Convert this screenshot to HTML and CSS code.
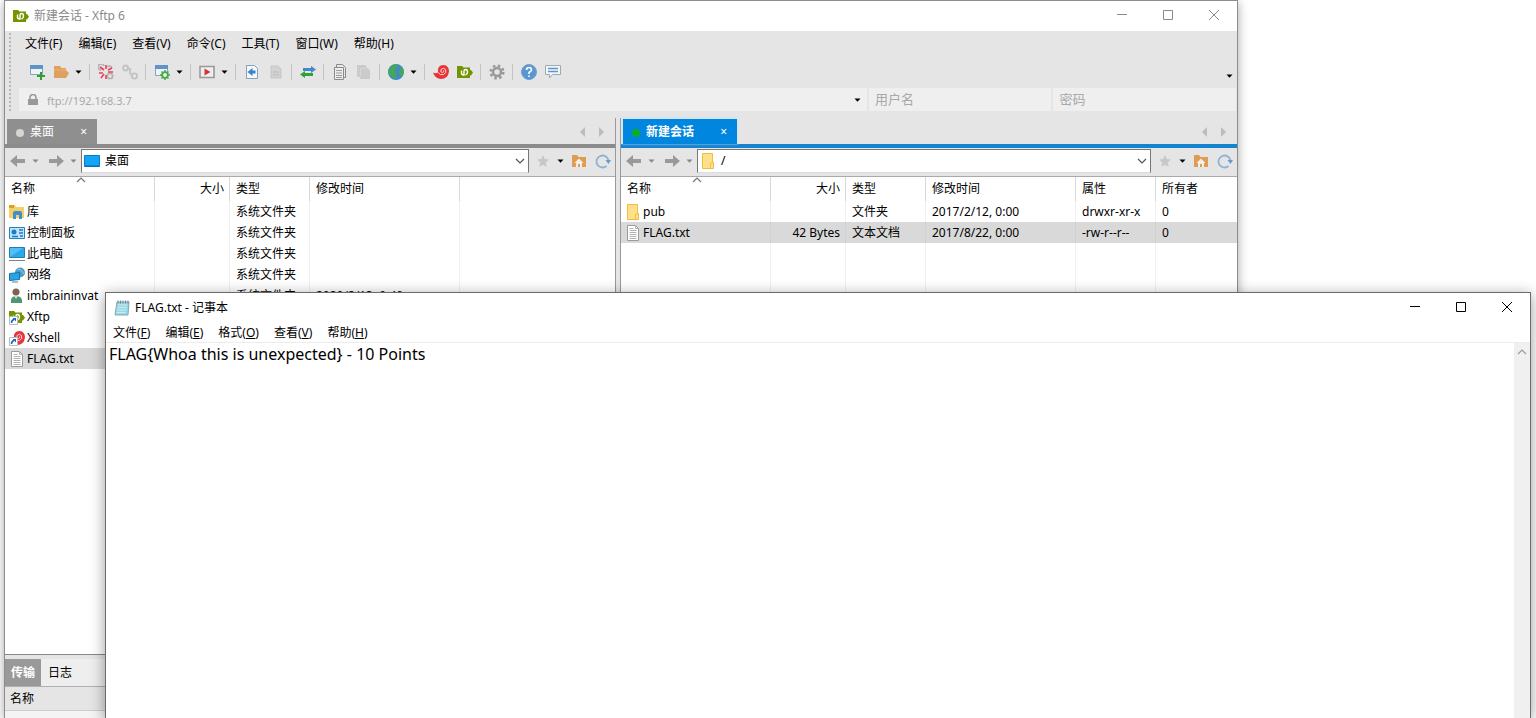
FILE: index.html
```html
<!DOCTYPE html>
<html lang="zh-CN">
<head>
<meta charset="utf-8">
<title>新建会话 - Xftp 6</title>
<link rel="stylesheet" href="styles.css">
</head>
<body>
<svg class="defs" aria-hidden="true">
  <symbol id="caret" viewBox="0 0 7 4"><path d="M0.5 0.5h6L3.5 3.8z" fill="currentColor"/></symbol>
  <symbol id="xftp" viewBox="0 0 16 16"><path d="M0 2h5l1.500 1.500H13V6h1l2 2.500-2 3h-1V14H0z" fill="#719500"/><path d="M4.500 6.500V9q0 2 2.500 2V7q0-1.500 1.500-1.500Q10.500 5.500 10.500 8T8.500 11" fill="none" stroke="#fff" stroke-width="1.400"/></symbol>
  <symbol id="xshell" viewBox="0 0 16 16"><path d="M0 8.500Q2.500 10 5 8.500Q4 1 10.500 1Q16 1.500 16 7.500Q15 15 8 15Q2 15 0 8.500Z" fill="#e9343a"/><path d="M5 8.500Q7 11.500 10.500 10.500Q14 9 12.500 5.500Q10.500 3 8 5.500Q7 8.500 9.500 8.500Q11.500 8 10.500 6.500" fill="none" stroke="#ffd9d6" stroke-width="1"/></symbol>
  <symbol id="folder" viewBox="0 0 16 16"><path d="M2.500 0.500h10v9h1v6h-11z" fill="#ffe08a" stroke="#edbd45"/><path d="M10.500 15V10h2.500" fill="none" stroke="#f2c34f"/></symbol>
  <symbol id="file" viewBox="0 0 16 16"><path d="M2.500 0.500h8l3 3v12h-11z" fill="#fff" stroke="#9a9a9a"/><path d="M10.500 0.500v3h3M4.500 3.500h4M4.500 5.500h7M4.500 7.500h7M4.500 9.500h7M4.500 11.500h7M4.500 13.500h7" fill="none" stroke="#b2b2b2"/></symbol>
  <symbol id="left" viewBox="0 0 16 12"><path d="M0 6l7-6v4h8v4H7v4z" fill="#999"/></symbol>
  <symbol id="right" viewBox="0 0 16 12"><path d="M16 6L9 0v4H1v4h8v4z" fill="#999"/></symbol>
  <symbol id="chev" viewBox="0 0 10 6"><path d="M1 1l4 4 4-4" fill="none" stroke="#555" stroke-width="1.200"/></symbol>
  <symbol id="up" viewBox="0 0 10 6"><path d="M1 5l4-4 4 4" fill="none" stroke="currentColor" stroke-width="1.200"/></symbol>
  <symbol id="star" viewBox="0 0 16 16"><path d="M8 2l1.800 4 4.200.5-3.200 3 .9 4.500L8 11.700 4.300 14l.9-4.500L2 6.500 6.200 6z" fill="#c8c8c8"/></symbol>
  <symbol id="home" viewBox="0 0 16 16"><path d="M1 2h5l1.500 2H15v10H1z" fill="#df9c55"/><path d="M8 5.500L3.500 10H5v4h2v-3h2v3h2v-4h1.500z" fill="#f3eee8"/></symbol>
  <symbol id="refresh" viewBox="0 0 16 16"><path d="M11.500 13A6 6 0 1 1 13.500 8" fill="none" stroke="#8fb3d6" stroke-width="1.800"/><path d="M10.500 7h5.500l-2.500 4z" fill="#6b9aca"/></symbol>
  <symbol id="link" viewBox="0 0 16 16"><g fill="none" stroke="#c2c2c2" stroke-width="1.800"><circle cx="3.500" cy="4" r="2.500"/><circle cx="12.500" cy="12" r="2.700"/><path d="M6 4.500Q9 4 8 7T10 10.500"/></g></symbol>
  <symbol id="shortcut" viewBox="0 0 16 16"><path d="M.5 7.500h8v8h-8z" fill="#fff" stroke="#bbb"/><path d="M2.500 14q0-3 2.500-3.500" fill="none" stroke="#1769bd" stroke-width="1.500"/><path d="M3.500 9H7v3.500z" fill="#1769bd"/></symbol>
  <symbol id="min" viewBox="0 0 12 12"><path d="M1 5.500h10" stroke="currentColor"/></symbol>
  <symbol id="max" viewBox="0 0 12 12"><path d="M1.500 1.500h9v9h-9z" fill="none" stroke="currentColor"/></symbol>
  <symbol id="close" viewBox="0 0 12 12"><path d="M1 1l10 10M11 1L1 11" stroke="currentColor"/></symbol>
</svg>
<main class="desktop">
  <section class="window xftp" aria-label="Xftp 6">
    <header class="titlebar">
      <svg class="i16"><use href="#xftp"/></svg>
      <span class="title">新建会话 - Xftp 6</span>
      <button class="winbtn" aria-label="最小化"><svg class="i12"><use href="#min"/></svg></button>
      <button class="winbtn" aria-label="最大化"><svg class="i12"><use href="#max"/></svg></button>
      <button class="winbtn" aria-label="关闭"><svg class="i12"><use href="#close"/></svg></button>
    </header>
    <div class="chrome">
      <div class="grip"></div>
      <div class="bars">
        <nav class="menu">
          <button>文件(F)</button><button>编辑(E)</button><button>查看(V)</button><button>命令(C)</button><button>工具(T)</button><button>窗口(W)</button><button>帮助(H)</button>
        </nav>
        <div class="tools">
          <button class="tool" aria-label="新建"><svg class="i16" viewBox="0 0 16 16"><path d="M1.500 1.500h12v9h-12z" fill="#eef3f6" stroke="#8ba5b8"/><path d="M1 1h13v4H1z" fill="#5d94cb"/><path d="M8 12h8M12 8v8" stroke="#2f9f2f" stroke-width="2"/></svg></button>
          <button class="tool" aria-label="打开"><svg class="i16" viewBox="0 0 16 16"><path d="M1 2h6l1.500 2H13v2l3 3-3 5H1z" fill="#e0a15f"/><path d="M1 6h12" stroke="#e8b47a"/></svg></button>
          <button class="drop" aria-label="打开菜单"><svg class="caret"><use href="#caret"/></svg></button><i class="sep"></i>
          <button class="tool" aria-label="断开"><svg class="i16" viewBox="0 0 16 16"><g fill="none" stroke="#b5b5b5" stroke-width="1.800"><path d="M6 2A3 3 0 1 0 3 6M9 3a3 3 0 0 1 5 1"/><circle cx="12" cy="12" r="2.700"/></g><path d="M2 3l4 3M8 1v4M14 4l-4 2M1 9h4M3 14l3-4M8 11v4M10 8h5" stroke="#e8405a" stroke-width="1.600"/></svg></button>
          <button class="tool" aria-label="重新连接"><svg class="i16"><use href="#link"/></svg></button><i class="sep"></i>
          <button class="tool" aria-label="属性"><svg class="i16" viewBox="0 0 16 16"><path d="M1.500 1.500h12v10h-12z" fill="#eef3f6" stroke="#8ba5b8"/><path d="M1 1h13v4H1z" fill="#5d94cb"/><circle cx="11" cy="11" r="2.800" fill="#eef3f6" stroke="#48a64b" stroke-width="1.800"/><path d="M11 6v2M11 14v2M6 11h2M14 11h2M7.500 7.500l1.500 1.500M13 13l1.500 1.500M14.500 7.500L13 9M7.500 14.500L9 13" stroke="#48a64b" stroke-width="1.500"/></svg></button>
          <button class="drop" aria-label="属性菜单"><svg class="caret"><use href="#caret"/></svg></button><i class="sep"></i>
          <button class="tool" aria-label="运行"><svg class="i16" viewBox="0 0 16 16"><path d="M1 2.500h14v11H1z" fill="#eee" stroke="#999" stroke-width="1.600"/><path d="M5.500 4.500l6 3.500-6 3.500z" fill="#d8323a"/></svg></button>
          <button class="drop" aria-label="运行菜单"><svg class="caret"><use href="#caret"/></svg></button><i class="sep"></i>
          <button class="tool" aria-label="传输文件"><svg class="i16" viewBox="0 0 16 16"><path d="M2.500 1.500h8l3 3v10h-11z" fill="#f5f8fb" stroke="#8aa0b5"/><path d="M3.500 8l5-4v2.500h3v3h-3V12z" fill="#3b82cc"/></svg></button>
          <button class="tool" aria-label="文件"><svg class="i16" viewBox="0 0 16 16"><path d="M3 2h7l3 3v9H3z" fill="#d2d2d2" stroke="#c6c6c6"/><path d="M5 8h6M5 11h6" stroke="#bbb"/></svg></button><i class="sep"></i>
          <button class="tool" aria-label="同步"><svg class="i16" viewBox="0 0 16 16"><path d="M3 4h8V2l5 3.500L11 9V7H3z" fill="#4387d0"/><path d="M13 9H5V7L0 10.500 5 14v-2h8z" fill="#35a035"/></svg></button><i class="sep"></i>
          <button class="tool" aria-label="复制"><svg class="i16" viewBox="0 0 16 16"><path d="M4.500 .5h6l3 3v10h-9z" fill="#e8e8e8" stroke="#8a8a8a"/><path d="M2.500 3.500h9v12h-9z" fill="#eee" stroke="#8a8a8a"/><path d="M4 6.500h6M4 9h6M4 11.500h6M4 13.500h6" stroke="#9a9a9a"/></svg></button>
          <button class="tool" aria-label="粘贴"><svg class="i16" viewBox="0 0 16 16"><path d="M1 1h9v2l4 3v9H4v-2H1z" fill="#cbcbcb"/><path d="M4.500 12V4.500H10" fill="none" stroke="#d8d8d8"/></svg></button><i class="sep"></i>
          <button class="tool" aria-label="语言"><svg class="i16" viewBox="0 0 16 16"><circle cx="8" cy="8" r="8" fill="#4289c9"/><path d="M4 1.500Q8-.5 10 1L8 5 6 7l3 3-2 5Q1 13 0 7zM12 3l3 2q2 5-2 8l-2-4z" fill="#43a957"/></svg></button>
          <button class="drop" aria-label="语言菜单"><svg class="caret"><use href="#caret"/></svg></button><i class="sep"></i>
          <button class="tool" aria-label="Xshell"><svg class="i16"><use href="#xshell"/></svg></button>
          <button class="tool" aria-label="Xftp"><svg class="i16"><use href="#xftp"/></svg></button><i class="sep"></i>
          <button class="tool" aria-label="选项"><svg class="i16" viewBox="0 0 16 16"><circle cx="8" cy="8" r="4" fill="none" stroke="#999" stroke-width="2.500"/><circle cx="8" cy="8" r="6.300" fill="none" stroke="#999" stroke-width="2.600" stroke-dasharray="2.500 2.450"/></svg></button><i class="sep"></i>
          <button class="tool" aria-label="帮助"><svg class="i16" viewBox="0 0 16 16"><circle cx="8" cy="8" r="7.500" fill="#5a97d0" stroke="#6f9fc9"/><path d="M5.500 6Q5.500 3.500 8 3.500T10.500 6Q10.500 7 8 8.500V10M8 11.500v1.500" fill="none" stroke="#fff" stroke-width="1.600"/></svg></button>
          <button class="tool" aria-label="反馈"><svg class="i16" viewBox="0 0 16 16"><path d="M.5 1.500h15v9H7.500L4.500 14v-3.500h-4z" fill="#f2f6f9" stroke="#9aabb8"/><path d="M3 4.500h10M3 7.500h10" stroke="#5f96c8" stroke-width="1.400"/></svg></button>
          <button class="more" aria-label="更多"><svg class="caret"><use href="#caret"/></svg></button>
        </div>
        <div class="address">
          <label class="field host"><svg class="i12" viewBox="0 0 12 12"><path d="M3 5V3.500a3 3 0 0 1 6 0V5" fill="none" stroke="#999" stroke-width="1.600"/><path d="M1 5h10v6H1z" fill="#999"/></svg><input aria-label="主机" value="ftp://192.168.3.7"><svg class="caret"><use href="#caret"/></svg></label>
          <input class="field login" aria-label="用户名" placeholder="用户名">
          <input class="field login" aria-label="密码" type="password" placeholder="密码">
        </div>
      </div>
    </div>
    <div class="panes">
      <section class="pane local">
        <div class="tabs"><button class="tab"><i class="dot"></i><span>桌面</span><b>×</b></button><span class="scroll"><i class="tri prev"></i><i class="tri next"></i></span></div>
        <div class="nav">
          <button class="go" aria-label="后退"><svg class="arrow"><use href="#left"/></svg></button><button class="hist" aria-label="后退记录"><svg class="caret"><use href="#caret"/></svg></button>
          <button class="go" aria-label="前进"><svg class="arrow"><use href="#right"/></svg></button><button class="hist" aria-label="前进记录"><svg class="caret"><use href="#caret"/></svg></button>
          <label class="combo"><svg class="i16" viewBox="0 0 16 16"><path d="M.5 2.500h15v11H.5z" fill="#12a5f8" stroke="#087bc1"/><path d="M1 13h14" stroke="#056aa9"/></svg><select aria-label="本地路径"><option>桌面</option></select><svg class="chev"><use href="#chev"/></svg></label>
          <button class="go" aria-label="收藏"><svg class="i16"><use href="#star"/></svg></button><button class="hist dark" aria-label="收藏菜单"><svg class="caret"><use href="#caret"/></svg></button>
          <button class="go" aria-label="主页"><svg class="i16"><use href="#home"/></svg></button><button class="go last" aria-label="刷新"><svg class="i16"><use href="#refresh"/></svg></button>
        </div>
        <div class="list">
          <table>
            <colgroup><col class="c-name"><col class="c-size"><col class="c-type"><col class="c-time"><col></colgroup>
            <thead><tr><th>名称<svg class="sort"><use href="#up"/></svg></th><th class="num">大小</th><th>类型</th><th>修改时间</th><th></th></tr></thead>
            <tbody>
              <tr><td><span class="name"><svg class="i16" viewBox="0 0 16 16"><path d="M0 1h6l1 2h8v11H0z" fill="#f8cf62"/><path d="M0 1h5v3H0z" fill="#df9f20"/><path d="M4 15V9q0-2 2-2h5q2 0 2 2v6h-3v-4H7v4z" fill="#3c8fd0"/></svg>库</span></td><td></td><td>系统文件夹</td><td></td><td></td></tr>
              <tr><td><span class="name"><svg class="i16" viewBox="0 0 16 16"><path d="M.5 2.500h15v11H.5z" fill="#bfe4fa" stroke="#2383bf"/><circle cx="5" cy="7" r="2.500" fill="#1b7fc6"/><path d="M10 5h4M10 8h4M3 11.500h6M11 11h3" stroke="#1b7fc6" stroke-width="1.500"/></svg>控制面板</span></td><td></td><td>系统文件夹</td><td></td><td></td></tr>
              <tr><td><span class="name"><svg class="i16" viewBox="0 0 16 16"><path d="M.5 1.500h15v10H.5z" fill="#52c0f7" stroke="#237caf"/><path d="M1 11L14 2h1v9z" fill="#2ba7ec"/><path d="M0 14.500h16" stroke="#6f8495"/></svg>此电脑</span></td><td></td><td>系统文件夹</td><td></td><td></td></tr>
              <tr><td><span class="name"><svg class="i16" viewBox="0 0 16 16"><circle cx="11" cy="5.500" r="5" fill="#4f9cc9"/><path d="M8 2l4 1 3 4" fill="none" stroke="#9bcbe3"/><path d="M.5 6.500l10-1v7l-10 1z" fill="#25a4e7" stroke="#1e72a5"/><path d="M3 15h6" stroke="#507e9b"/></svg>网络</span></td><td></td><td>系统文件夹</td><td></td><td></td></tr>
              <tr><td><span class="name"><svg class="i16" viewBox="0 0 16 16"><circle cx="7" cy="4" r="3.500" fill="#80604e"/><path d="M2 15q-1-7 5-7 7 0 6 7z" fill="#4b9874"/><path d="M5 8l2 3 2-3" fill="#e8d3bd"/></svg>imbraininvat</span></td><td></td><td>系统文件夹</td><td>2020/2/13, 9:40</td><td></td></tr>
              <tr><td><span class="name"><svg class="i16"><use href="#xftp"/><use href="#shortcut"/></svg>Xftp</span></td><td></td><td></td><td></td><td></td></tr>
              <tr><td><span class="name"><svg class="i16"><use href="#xshell"/><use href="#shortcut"/></svg>Xshell</span></td><td></td><td></td><td></td><td></td></tr>
              <tr class="sel"><td><span class="name"><svg class="i16"><use href="#file"/></svg>FLAG.txt</span></td><td></td><td></td><td></td><td></td></tr>
              <tr class="fill"><td></td><td></td><td></td><td></td><td></td></tr>
            </tbody>
          </table>
        </div>
      </section>
      <section class="pane remote">
        <div class="tabs"><button class="tab"><i class="dot"></i><span>新建会话</span><b>×</b></button><span class="scroll"><i class="tri prev"></i><i class="tri next"></i></span></div>
        <div class="nav">
          <button class="go" aria-label="后退"><svg class="arrow"><use href="#left"/></svg></button><button class="hist" aria-label="后退记录"><svg class="caret"><use href="#caret"/></svg></button>
          <button class="go" aria-label="前进"><svg class="arrow"><use href="#right"/></svg></button><button class="hist" aria-label="前进记录"><svg class="caret"><use href="#caret"/></svg></button>
          <label class="combo"><svg class="i16"><use href="#folder"/></svg><select aria-label="远程路径"><option>/</option></select><svg class="chev"><use href="#chev"/></svg></label>
          <button class="go" aria-label="收藏"><svg class="i16"><use href="#star"/></svg></button><button class="hist dark" aria-label="收藏菜单"><svg class="caret"><use href="#caret"/></svg></button>
          <button class="go" aria-label="主页"><svg class="i16"><use href="#home"/></svg></button><button class="go last" aria-label="刷新"><svg class="i16"><use href="#refresh"/></svg></button>
        </div>
        <div class="list">
          <table>
            <colgroup><col class="c-name"><col class="c-size"><col class="c-type"><col class="c-time"><col class="c-type"><col></colgroup>
            <thead><tr><th>名称<svg class="sort"><use href="#up"/></svg></th><th class="num">大小</th><th>类型</th><th>修改时间</th><th>属性</th><th>所有者</th></tr></thead>
            <tbody>
              <tr><td><span class="name"><svg class="i16"><use href="#folder"/></svg>pub</span></td><td></td><td>文件夹</td><td>2017/2/12, 0:00</td><td>drwxr-xr-x</td><td>0</td></tr>
              <tr class="sel"><td><span class="name"><svg class="i16"><use href="#file"/></svg>FLAG.txt</span></td><td class="num">42 Bytes</td><td>文本文档</td><td>2017/8/22, 0:00</td><td>-rw-r--r--</td><td>0</td></tr>
              <tr class="fill"><td></td><td></td><td></td><td></td><td></td><td></td></tr>
            </tbody>
          </table>
        </div>
      </section>
    </div>
    <section class="queue">
      <div class="qtabs"><button class="on">传输</button><button>日志</button></div>
      <div class="qhead">名称</div>
    </section>
  </section>

  <section class="window notepad" aria-label="记事本">
    <header class="titlebar">
      <svg class="i16" viewBox="0 0 16 16"><path d="M3 2h12l-1 13H1z" fill="#9ad8e6" stroke="#7fa9b5"/><path d="M4 5h9M3.500 7.500h9M3 10h9M2.500 12.500h9" stroke="#c8edf4"/><path d="M4 .5v3M6.500.5v3M9 .5v3M11.500.5v3M14 .5v3" stroke="#708890"/></svg>
      <span class="title">FLAG.txt - 记事本</span>
      <button class="winbtn" aria-label="最小化"><svg class="i12"><use href="#min"/></svg></button>
      <button class="winbtn" aria-label="最大化"><svg class="i12"><use href="#max"/></svg></button>
      <button class="winbtn" aria-label="关闭"><svg class="i12"><use href="#close"/></svg></button>
    </header>
    <nav class="menu">
      <button>文件(<u>F</u>)</button><button>编辑(<u>E</u>)</button><button>格式(<u>O</u>)</button><button>查看(<u>V</u>)</button><button>帮助(<u>H</u>)</button>
    </nav>
    <div class="editor">
      <textarea aria-label="文本" spellcheck="false">FLAG{Whoa this is unexpected} - 10 Points</textarea>
      <div class="scrollbar"><svg class="chev"><use href="#up"/></svg></div>
    </div>
  </section>
</main>
</body>
</html>
```

FILE: styles.css
```css
* { box-sizing: border-box; }
body { margin: 0; background: #fff; color: #000; font: 12px/20px "Noto Sans", "Noto Sans CJK SC", sans-serif; }
button, input, select, textarea { font: inherit; color: inherit; border: 0; background: none; padding: 0; margin: 0; outline: 0; }
button { display: flex; align-items: center; justify-content: center; flex: none; }
svg { display: block; flex: none; }
.defs { position: absolute; width: 0; height: 0; }
.i12 { width: 12px; height: 12px; }
.i16 { width: 16px; height: 16px; }
.caret { width: 7px; height: 4px; }
.arrow { width: 16px; height: 12px; }
.chev { width: 10px; height: 6px; }

.desktop { position: relative; height: 100vh; overflow: hidden; }
.window { position: absolute; bottom: 0; display: flex; flex-direction: column; }
.xftp { left: 4px; right: 298px; top: 0; border: 1px solid #8d8d8d; border-bottom: 0; background: #e5e5e5; box-shadow: 0 2px 10px rgba(0, 0, 0, .35); }
.notepad { left: 105px; right: 5px; top: 292px; border: 1px solid #6b6b6b; border-bottom: 0; background: #fff; box-shadow: 0 3px 14px rgba(0, 0, 0, .4); }

.titlebar { display: flex; align-items: center; flex: none; height: 30px; padding-left: 8px; background: #fff; }
.title { flex: 1; padding-left: 5px; }
.winbtn { width: 46px; height: 30px; padding-bottom: 2px; }
.xftp .titlebar { color: #8a8a8a; }
.menu { display: flex; }

.chrome { display: flex; flex: none; height: 87px; padding: 2px 1px 0 4px; }
.grip { width: 2px; height: 78px; background: repeating-linear-gradient(#b5b5b5 0 2px, #e5e5e5 2px 4px); }
.bars { flex: 1; min-width: 0; }
.bars .menu { gap: 16px; height: 22px; padding-left: 14px; }
.tools { display: flex; align-items: center; height: 33px; padding-left: 14px; }
.tool { width: 24px; height: 24px; }
.drop { width: 13px; height: 24px; padding-right: 3px; }
.sep { flex: none; width: 1px; height: 16px; margin: 0 4px 0 3px; background: #c4c4c4; }
.more { margin-left: auto; padding-top: 9px; width: 14px; height: 24px; }
.address { display: flex; gap: 2px; height: 23px; padding-left: 8px; color: #a0a0a0; }
.field { background: #efefef; height: 23px; min-width: 0; }
.host { display: flex; align-items: center; flex: 1; padding: 0 6px 0 8px; color: #000; }
.host input { flex: 1; min-width: 0; padding: 2px 0 0 8px; color: #a8a8a8; font-size: 11px; }
.login { flex: none; width: 15%; padding-left: 6px; }
.field::placeholder { color: #a8a8a8; font-size: 13px; }

.panes { display: flex; flex: 1; gap: 4px; min-height: 0; }
.pane { display: flex; flex-direction: column; min-width: 0; }
.local { flex: 611; border-right: 1px solid #999; }
.remote { flex: 617; border-left: 1px solid #999; }
.tabs { display: flex; flex: none; height: 30px; padding: 1px 11px 0 2px; justify-content: space-between; border-bottom: 4px solid #8b8b8b; }
.remote .tabs { border-color: #1484cf; }
.tab { justify-content: flex-start; height: 25px; width: 90px; padding: 0 10px 0 9px; color: #fff; background: #8f8f8f; }
.remote .tab { width: 114px; background: #0086df; box-shadow: 0 -1px 2px 1px #d0e5f2; font-weight: bold; }
.tab b { margin-left: auto; font-weight: normal; }
.dot { width: 8px; height: 8px; margin: 3px 6px 0 0; border-radius: 50%; background: #d5d5d5; }
.remote .dot { background: #0cae28; }
.scroll { display: flex; align-items: center; gap: 14px; }
.tri { width: 0; height: 0; border: 5px solid transparent; }
.prev { border-right-color: #bcbcbc; border-left-width: 0; }
.next { border-left-color: #bcbcbc; border-right-width: 0; }

.nav { display: flex; flex: none; align-items: center; height: 29px; padding: 0 2px 3px 3px; border-bottom: 1px solid #aaa; }
.go { width: 20px; height: 24px; }
.hist { width: 14px; height: 24px; margin-right: 4px; color: #888; }
.dark { color: #000; margin-right: 2px; }
.combo { display: flex; flex: 1; align-items: center; min-width: 0; height: 24px; margin: 0 4px 0 0; padding: 1px 3px 0 2px; background: #fff; border: 1px solid #777; border-bottom-color: #ddd; }
.hist + .combo { margin-left: -3px; }
.combo select { flex: 1; min-width: 0; appearance: none; padding-left: 5px; }
.last { margin-left: 4px; }

.list { flex: 1; min-height: 0; background: #fff; overflow: hidden; }
table { width: 100%; height: 100%; table-layout: fixed; border-collapse: separate; border-spacing: 0; }
.c-name { width: 150px; }
.c-size { width: 75px; }
.c-type { width: 80px; }
.c-time { width: 150px; }
th, td { padding: 0 5px 0 6px; text-align: left; font-weight: normal; white-space: nowrap; border-right: 1px solid #f0f0f0; }
th { position: relative; height: 24px; border-right-color: #d8d8d8; }
td { height: 21px; line-height: 20px; }
th:last-child, td:last-child { border-right: 0; }
td:first-child { padding-left: 4px; }
.fill td { height: auto; }
.num { text-align: right; }
.name { display: flex; align-items: center; gap: 2px; }
.sort { position: absolute; top: 0; left: calc(50% - 4px); width: 10px; height: 6px; color: #777; }
.sel td { background: #d9d9d9; border-right-color: #d1d1d1; }

.queue { flex: none; height: 64px; border-top: 1px solid #888; background: #f4f4f4; }
.qtabs { display: flex; height: 32px; border-top: 4px solid #e5e5e5; border-bottom: 1px solid #b0b0b0; background: #eee; }
.qtabs button { width: 38px; }
.qtabs .on { width: 36px; background: #999; color: #fff; font-weight: bold; }
.qhead { height: 24px; padding: 2px 5px; background: #e5e5e5; border-bottom: 1px solid #ccc; }

.notepad .menu { flex: none; gap: 15px; height: 19px; padding-left: 7px; }
.editor { display: flex; flex: 1; min-height: 0; border-top: 1px solid #ececec; }
.editor textarea { flex: 1; resize: none; padding: 0 3px; font-size: 16px; line-height: 22px; }
.scrollbar { width: 16px; padding: 6px 3px; background: #f0f0f0; color: #999; }
```
